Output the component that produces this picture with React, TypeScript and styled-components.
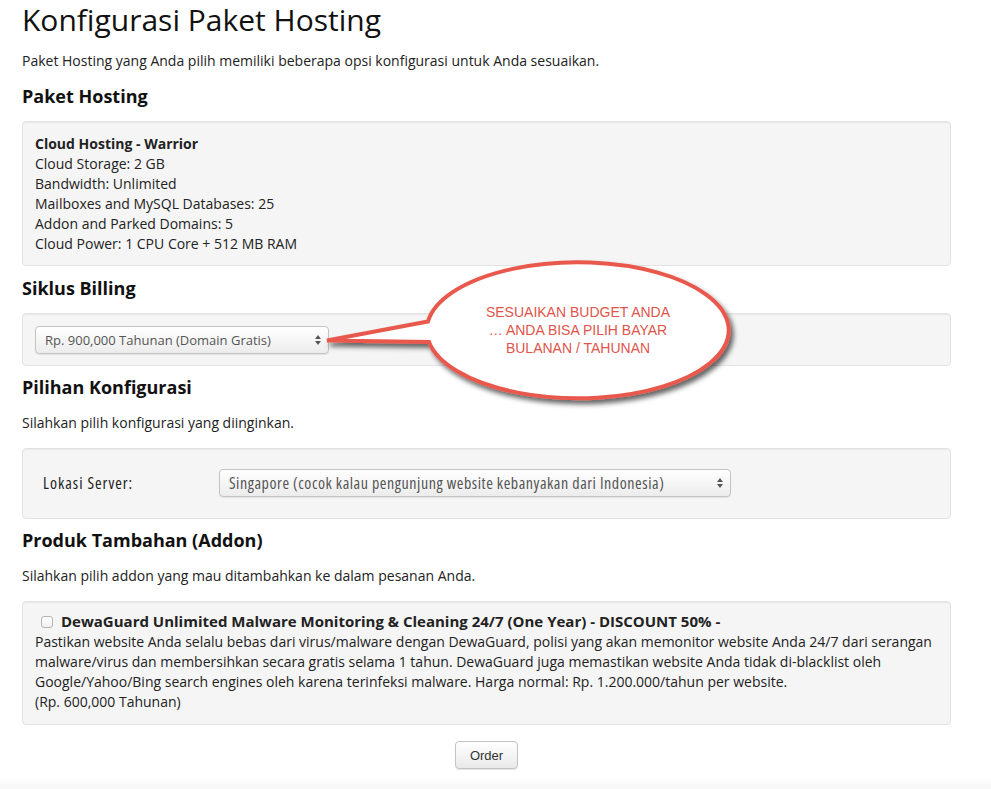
import React from "react";
import styled, { createGlobalStyle } from "styled-components";

const Global = createGlobalStyle`
  html, body { margin: 0; padding: 0; background: #fff; }
  body { font-family: "Open Sans", "DejaVu Sans", sans-serif; color: #222; }
`;

const Page = styled.div`
  position: relative;
  width: 991px;
  min-height: 789px;
  overflow: hidden;
`;

const Content = styled.div`
  width: 929px;
  padding: 0 0 0 22px;
`;

const Title = styled.h1`
  margin: 0;
  font-size: 30px;
  line-height: 40px;
  font-weight: 400;
  color: #111;
`;

const Para = styled.p<{ $top: number; $bottom: number }>`
  margin: ${(p) => p.$top}px 0 ${(p) => p.$bottom}px;
  font-size: 14px;
  line-height: 20px;
`;

const Heading = styled.h2<{ $top: number; $bottom: number }>`
  margin: ${(p) => p.$top}px 0 ${(p) => p.$bottom}px;
  font-size: 18px;
  line-height: 24px;
  font-weight: 700;
  color: #111;
`;

const Well = styled.div<{ $pad: string }>`
  box-sizing: border-box;
  width: 929px;
  padding: ${(p) => p.$pad};
  background: #f5f5f5;
  border: 1px solid #e3e3e3;
  border-radius: 4px;
  box-shadow: inset 0 1px 1px rgba(0, 0, 0, 0.05);
  font-size: 14px;
  line-height: 20px;
`;

const Line = styled.div<{ $bold?: boolean }>`
  font-weight: ${(p) => (p.$bold ? 700 : 400)};
`;

const Select = styled.div<{ $width: number; $condensed?: boolean }>`
  box-sizing: border-box;
  width: ${(p) => p.$width}px;
  height: 28px;
  display: flex;
  align-items: center;
  justify-content: space-between;
  padding: 0 6px 0 9px;
  border: 1px solid #c4c4c4;
  border-radius: 4px;
  background: linear-gradient(#ffffff, #ececec);
  box-shadow: 0 1px 1px rgba(0, 0, 0, 0.08);
  font-size: ${(p) => (p.$condensed ? "16px" : "13px")};
  letter-spacing: ${(p) => (p.$condensed ? "0.55px" : "0")};
  color: #555;
  font-stretch: ${(p) => (p.$condensed ? "condensed" : "normal")};
`;

const Arrows = () => (
  <svg width="8" height="12" viewBox="0 0 8 12">
    <path d="M4 1 L7 5 L1 5 Z" fill="#555" />
    <path d="M4 11 L7 7 L1 7 Z" fill="#555" />
  </svg>
);

const FieldRow = styled.div`
  display: flex;
  align-items: center;
`;

const FieldLabel = styled.div`
  width: 176px;
  font-size: 16px;
  letter-spacing: 1px;
  font-stretch: condensed;
  color: #222;
`;

const AddonTitle = styled.label`
  display: flex;
  align-items: center;
  font-weight: 700;
  font-size: 15px;
  line-height: 21px;
  color: #222;
`;

const Check = styled.span`
  box-sizing: border-box;
  width: 12px;
  height: 12px;
  margin: 0 8px 0 6px;
  border: 1px solid #b5b5b5;
  border-radius: 3px;
  background: linear-gradient(#fff, #f0f0f0);
`;

const ButtonRow = styled.div`
  display: flex;
  justify-content: center;
  margin-top: 16px;
`;

const OrderButton = styled.button`
  width: 63px;
  height: 28px;
  padding: 0;
  border: 1px solid #c3c3c3;
  border-radius: 4px;
  background: linear-gradient(#ffffff, #e9e9e9);
  box-shadow: 0 1px 1px rgba(0, 0, 0, 0.1);
  font-family: "Liberation Sans", Arial, sans-serif;
  font-size: 13px;
  color: #333;
`;

const Footer = styled.div`
  margin-top: 6px;
  height: 20px;
  background: linear-gradient(#ffffff, #f4f4f4);
`;

const Callout = styled.svg`
  position: absolute;
  left: 300px;
  top: 250px;
  width: 460px;
  height: 165px;
  overflow: visible;
`;

const CalloutText = styled.text`
  font-family: "Liberation Sans", Arial, sans-serif;
  font-size: 14px;
  fill: #e0554a;
`;

export default function App() {
  return (
    <Page>
      <Global />
      <Content>
        <Title>Konfigurasi Paket Hosting</Title>
        <Para $top={11} $bottom={13}>
          Paket Hosting yang Anda pilih memiliki beberapa opsi konfigurasi untuk Anda sesuaikan.
        </Para>
        <Heading $top={0} $bottom={13}>Paket Hosting</Heading>
        <Well $pad="12px 12px 11px">
          <Line $bold>Cloud Hosting - Warrior</Line>
          <Line>Cloud Storage: 2 GB</Line>
          <Line>Bandwidth: Unlimited</Line>
          <Line>Mailboxes and MySQL Databases: 25</Line>
          <Line>Addon and Parked Domains: 5</Line>
          <Line>Cloud Power: 1 CPU Core + 512 MB RAM</Line>
        </Well>
        <Heading $top={10} $bottom={13}>Siklus Billing</Heading>
        <Well $pad="12px 12px 11px">
          <Select $width={294}>
            <span>Rp. 900,000 Tahunan (Domain Gratis)</span>
            <Arrows />
          </Select>
        </Well>
        <Heading $top={9} $bottom={0}>Pilihan Konfigurasi</Heading>
        <Para $top={14} $bottom={15}>Silahkan pilih konfigurasi yang diinginkan.</Para>
        <Well $pad="20px 20px 21px">
          <FieldRow>
            <FieldLabel>Lokasi Server:</FieldLabel>
            <Select $width={512} $condensed>
              <span>Singapore (cocok kalau pengunjung website kebanyakan dari Indonesia)</span>
              <Arrows />
            </Select>
          </FieldRow>
        </Well>
        <Heading $top={9} $bottom={0}>Produk Tambahan (Addon)</Heading>
        <Para $top={14} $bottom={15}>Silahkan pilih addon yang mau ditambahkan ke dalam pesanan Anda.</Para>
        <Well $pad="9px 12px 12px">
          <AddonTitle>
            <Check />
            DewaGuard Unlimited Malware Monitoring &amp; Cleaning 24/7 (One Year) - DISCOUNT 50% -
          </AddonTitle>
          <Line>
            Pastikan website Anda selalu bebas dari virus/malware dengan DewaGuard, polisi yang akan memonitor website Anda 24/7 dari serangan malware/virus dan membersihkan secara gratis selama 1 tahun. DewaGuard juga memastikan website Anda tidak di-blacklist oleh Google/Yahoo/Bing search engines oleh karena terinfeksi malware. Harga normal: Rp. 1.200.000/tahun per website.
          </Line>
          <Line>(Rp. 600,000 Tahunan)</Line>
        </Well>
        <ButtonRow>
          <OrderButton>Order</OrderButton>
        </ButtonRow>
      </Content>
      <Footer />
      <Callout viewBox="300 250 460 165">
        <defs>
          <filter id="shadow" x="-20%" y="-20%" width="140%" height="150%">
            <feDropShadow dx="3" dy="4" stdDeviation="2.5" floodColor="#000" floodOpacity="0.6" />
          </filter>
        </defs>
        <path
          d="M428 321.5 A151 68 0 1 1 429 342 L327 340.5 Z"
          fill="#fff"
          stroke="#e8594d"
          strokeWidth="4"
          strokeLinejoin="miter"
          filter="url(#shadow)"
        />
        <CalloutText x="578" y="317" textAnchor="middle">SESUAIKAN BUDGET ANDA</CalloutText>
        <CalloutText x="578" y="335" textAnchor="middle">… ANDA BISA PILIH BAYAR</CalloutText>
        <CalloutText x="578" y="353" textAnchor="middle">BULANAN / TAHUNAN</CalloutText>
      </Callout>
    </Page>
  );
}
